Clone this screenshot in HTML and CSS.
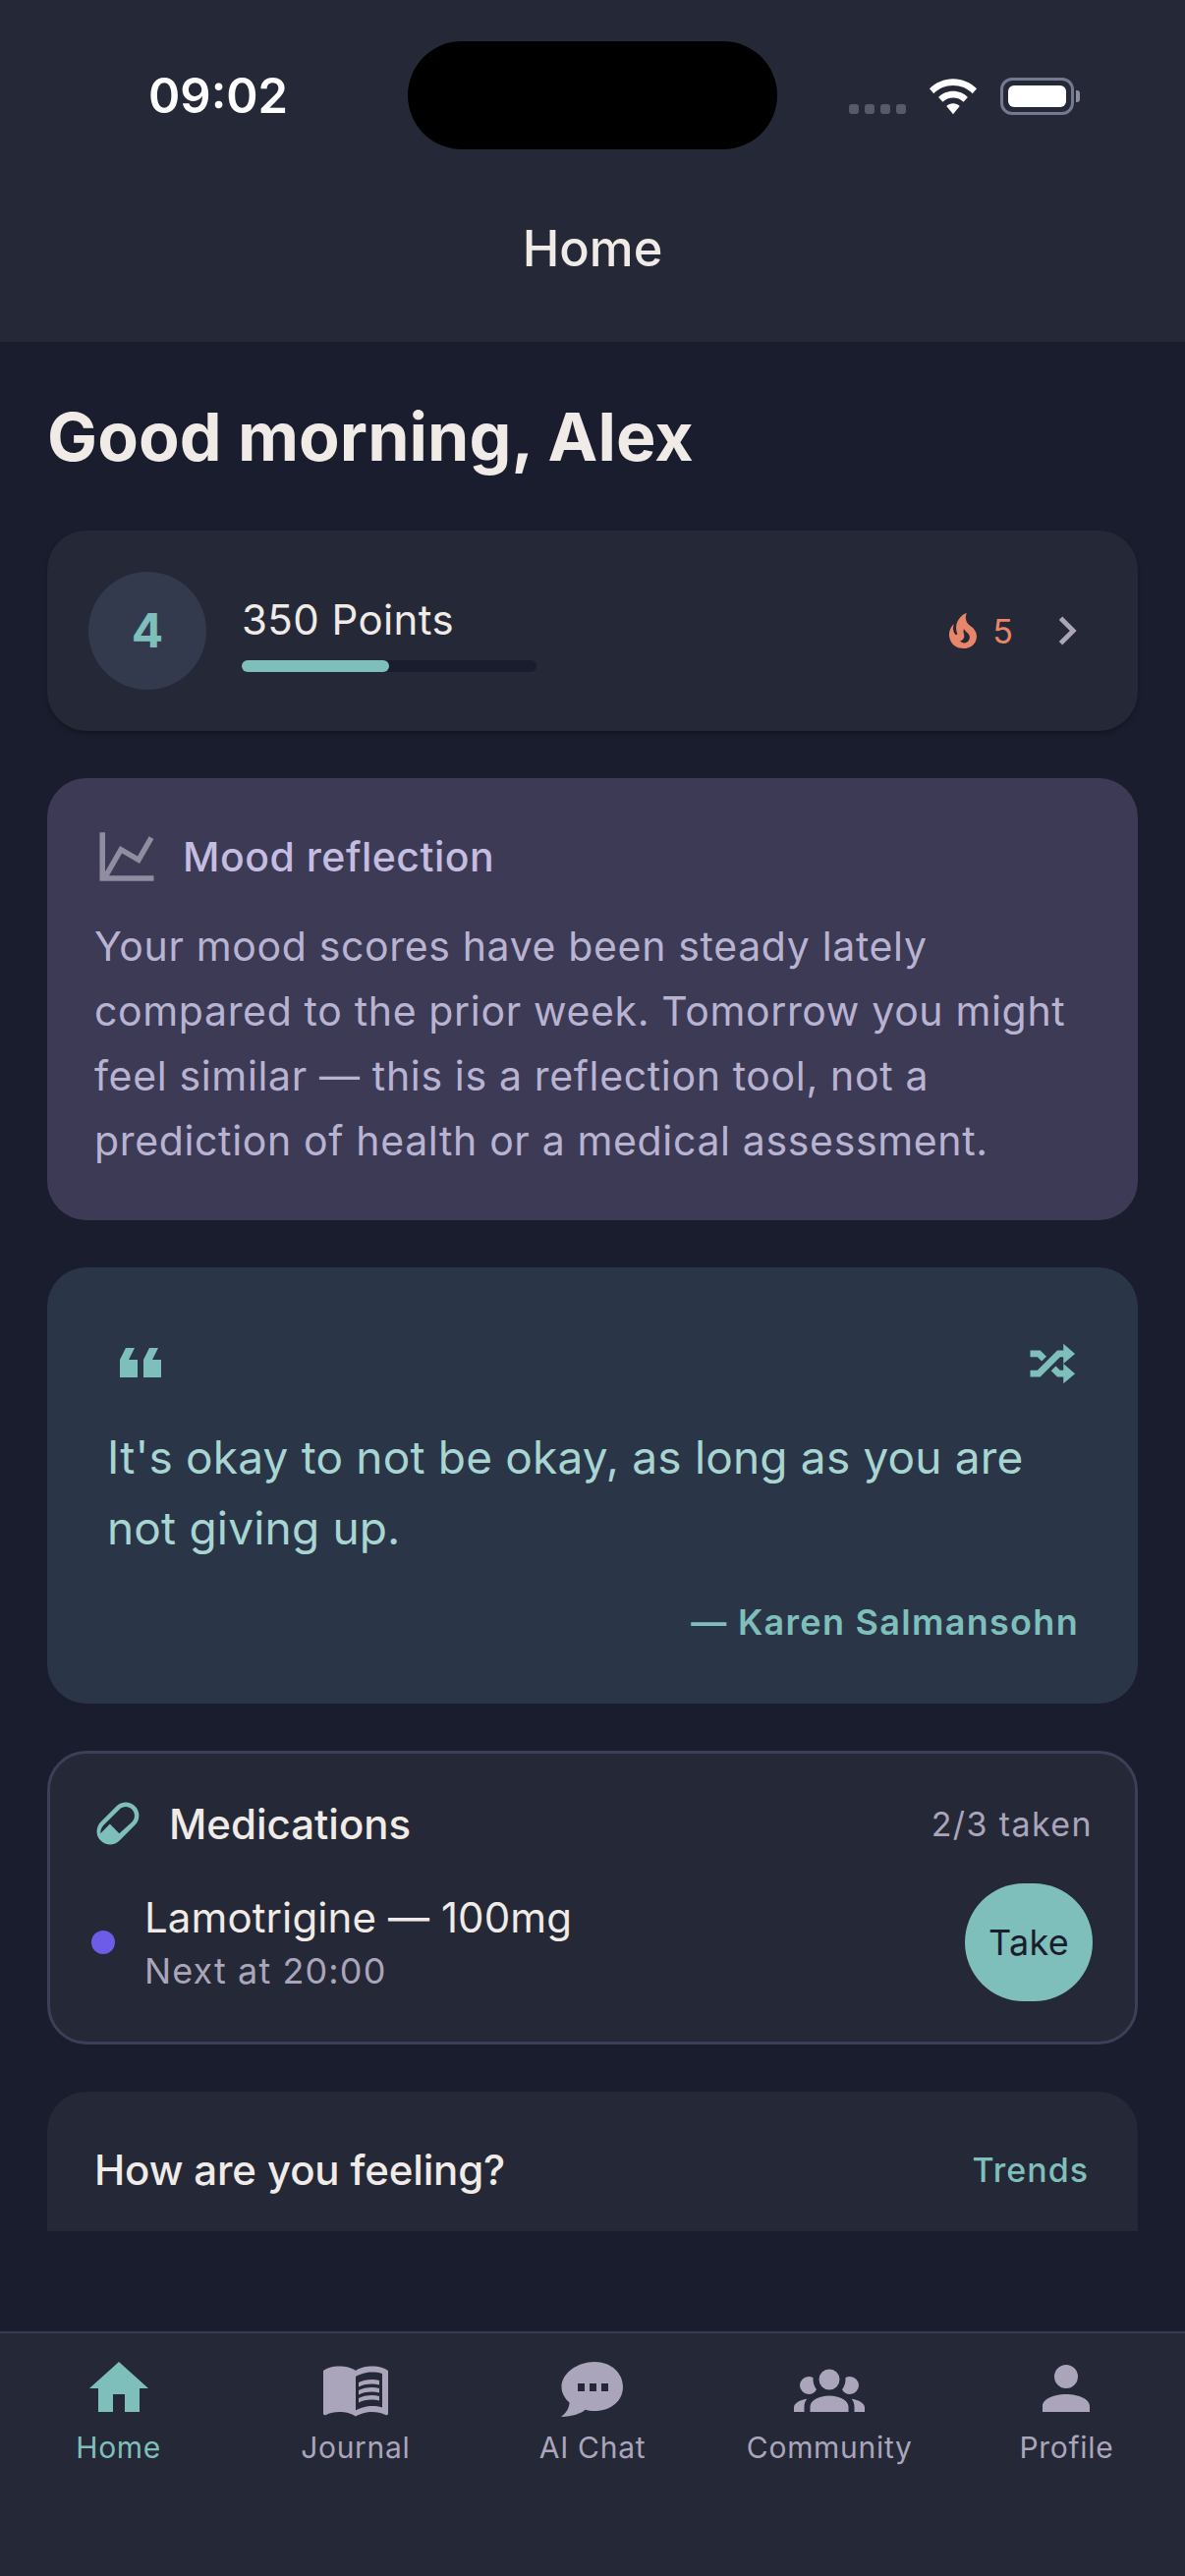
FILE: index.html
```html
<!DOCTYPE html>
<html lang="en">
<head>
    <meta charset="UTF-8">
    <meta name="viewport" content="width=device-width, initial-scale=1.0">
    <title>Home</title>
    <link rel="stylesheet" href="styles.css">
</head>
<body>
    <header class="top-bar">
        <div class="status-bar">
            <span class="clock">09:02</span>
            <div class="island"></div>
            <div class="status-icons">
                <div class="signal"><i></i><i></i><i></i><i></i></div>
                <svg class="wifi" viewBox="0 0 52 38"><path d="M26 0C35.500 0 44.500 3.800 51 10.500L46.500 15.500C41 10 34 7 26 7C18 7 11 10 5.500 15.500L1 10.500C7.500 3.800 16.500 0 26 0Z"/><path d="M26 13C32 13 37.500 15.300 41.500 19.500L37 24.500C34 21.500 30.200 20 26 20C21.800 20 18 21.500 15 24.500L10.500 19.500C14.500 15.300 20 13 26 13Z"/><path d="M26 26C28.700 26 31 27 33 29L26 37.500L19 29C21 27 23.300 26 26 26Z"/></svg>
                <div class="battery"><div class="battery-level"></div></div>
                <div class="battery-cap"></div>
            </div>
        </div>
        <div class="page-title">Home</div>
    </header>

    <main class="scroll">
        <h1 class="greeting">Good morning, Alex</h1>

        <section class="card level-card">
            <div class="level-badge">4</div>
            <div class="level-info">
                <div class="points">350 Points</div>
                <div class="progress"><div class="progress-fill"></div></div>
            </div>
            <div class="streak">
                <svg class="flame" viewBox="0 0 24 24"><path d="M17.66 11.2C17.43 10.9 17.15 10.64 16.89 10.38C16.22 9.78 15.46 9.35 14.82 8.72C13.33 7.26 13 4.85 13.95 3C13 3.23 12.17 3.75 11.46 4.32C8.87 6.4 7.85 10.07 9.07 13.22C9.11 13.32 9.15 13.42 9.15 13.55C9.15 13.77 9 13.97 8.8 14.05C8.57 14.15 8.33 14.09 8.14 13.93C8.08 13.88 8.04 13.83 8 13.76C6.87 12.33 6.69 10.28 7.45 8.64C5.78 10 4.87 12.3 5 14.47C5.06 14.97 5.12 15.47 5.29 15.97C5.43 16.57 5.7 17.17 6 17.7C7.08 19.43 8.95 20.67 10.96 20.92C13.1 21.19 15.39 20.8 17.03 19.32C18.86 17.66 19.5 15 18.56 12.72L18.43 12.46C18.22 12 17.66 11.2 17.66 11.2M14.5 17.5C14.22 17.74 13.76 18 13.4 18.1C12.28 18.5 11.16 17.94 10.5 17.28C11.69 17 12.4 16.12 12.61 15.23C12.78 14.43 12.46 13.77 12.33 13C12.21 12.26 12.23 11.63 12.5 10.94C12.69 11.32 12.89 11.7 13.13 12C13.9 13 15.11 13.44 15.37 14.8C15.41 14.94 15.43 15.08 15.43 15.23C15.46 16.05 15.1 16.95 14.5 17.5Z"/></svg>
                <span class="streak-count">5</span>
            </div>
            <svg class="chevron" viewBox="0 0 24 24"><path d="M8.59,16.58L13.17,12L8.59,7.41L10,6L16,12L10,18L8.59,16.58Z"/></svg>
        </section>

        <section class="card mood-card">
            <div class="mood-head">
                <svg class="chart" viewBox="0 0 24 24"><path d="M16,11.78L20.24,4.45L21.97,5.45L16.74,14.5L10.23,10.75L5.46,19H22V21H2V3H4V17.54L9.5,8L16,11.78Z"/></svg>
                <span class="mood-title">Mood reflection</span>
            </div>
            <p class="mood-text">Your mood scores have been steady lately compared to the prior week. Tomorrow you might feel similar — this is a reflection tool, not a prediction of health or a medical assessment.</p>
        </section>

        <section class="card quote-card">
            <div class="quote-icons">
                <svg class="quote-mark" viewBox="0 0 24 24"><path d="M10,7L8,11H11V17H5V11L7,7H10M18,7L16,11H19V17H13V11L15,7H18Z"/></svg>
                <svg class="shuffle" viewBox="0 0 24 24"><path d="M17,3L22.25,7.5L17,12L22.25,16.5L17,21V18H14.26L11.44,15.18L13.56,13.06L15.5,15H17V12L17,9H15.5L6.5,18H2V15H5.26L14.26,6H17V3M2,6H6.5L9.32,8.82L7.2,10.94L5.26,9H2V6Z"/></svg>
            </div>
            <p class="quote-text">It's okay to not be okay, as long as you are not giving up.</p>
            <div class="quote-author">— Karen Salmansohn</div>
        </section>

        <section class="card meds-card">
            <div class="meds-head">
                <svg class="pill" viewBox="0 0 24 24"><path fill-rule="evenodd" d="M4.22,11.29L11.29,4.22C13.64,1.88 17.43,1.88 19.78,4.22C22.12,6.57 22.12,10.36 19.78,12.71L12.71,19.78C10.36,22.12 6.57,22.12 4.22,19.78C1.88,17.43 1.88,13.64 4.22,11.29ZM5.64,12.71C4.59,13.75 4.1,15.12 4.14,16.5L8.37,12.27L12.61,16.5L18.36,11.29C19.92,9.73 19.92,7.2 18.36,5.64C16.8,4.08 14.27,4.08 12.71,5.64L5.64,12.71Z"/></svg>
                <span class="meds-title">Medications</span>
                <span class="meds-count">2/3 taken</span>
            </div>
            <div class="med-row">
                <div class="med-dot"></div>
                <div class="med-info">
                    <div class="med-name">Lamotrigine — 100mg</div>
                    <div class="med-next">Next at 20:00</div>
                </div>
                <button class="take-button">Take</button>
            </div>
        </section>

        <section class="card feeling-card">
            <span class="feeling-title">How are you feeling?</span>
            <span class="trends">Trends</span>
        </section>
    </main>

    <div class="scroll-gap"></div>

    <nav class="tab-bar">
        <div class="tab tab-active">
            <svg class="tab-icon" viewBox="0 0 24 24"><path d="M10,20V14H14V20H19V12H22L12,3L2,12H5V20H10Z"/></svg>
            <span>Home</span>
        </div>
        <div class="tab">
            <svg class="tab-icon" viewBox="0 0 24 24"><path fill-rule="evenodd" d="M12,21.500C10.650,20.450 8.200,20 6.500,20C4.850,20 3.150,20.300 1.750,21.050C1.650,21.100 1.600,21.100 1.500,21.100C1.250,21.100 1,20.850 1,20.600V6C1.600,5.550 2.250,5.250 3,5C4.110,4.650 5.330,4.500 6.500,4.500C8.450,4.500 10.550,4.900 12,6C13.450,4.900 15.550,4.500 17.500,4.500C18.670,4.500 19.890,4.650 21,5C21.750,5.250 22.400,5.550 23,6V20.600C23,20.850 22.750,21.100 22.500,21.100C22.400,21.100 22.350,21.100 22.250,21.050C20.850,20.300 19.150,20 17.500,20C15.800,20 13.350,20.650 12,21.500ZM12,8V19.500C13.350,18.650 15.800,18 17.500,18C18.700,18 19.900,18.150 21,18.500V7C19.900,6.650 18.700,6.500 17.500,6.500C15.800,6.500 13.350,7.150 12,8Z"/><path d="M13,11.500C14.110,10.820 15.600,10.500 17.500,10.500C18.410,10.500 19.260,10.590 20,10.820V9.300C19.260,9.100 18.410,9 17.500,9C15.800,9 14.270,9.390 13,9.970ZM13,14.160C14.110,13.500 15.600,13.160 17.500,13.160C18.410,13.160 19.260,13.250 20,13.480V11.960C19.260,11.760 18.410,11.660 17.500,11.660C15.800,11.660 14.270,12.050 13,12.630ZM13,16.830C14.110,16.160 15.600,15.830 17.500,15.830C18.410,15.830 19.260,15.920 20,16.150V14.630C19.260,14.430 18.410,14.330 17.500,14.330C15.800,14.330 14.270,14.720 13,15.300Z"/></svg>
            <span>Journal</span>
        </div>
        <div class="tab">
            <svg class="tab-icon" viewBox="0 0 72 72"><path fill-rule="evenodd" d="M38 9C55 9 67 20.500 67 34.500C67 48.500 55 59 38 59C34 59 31.500 58.600 28.500 57.700C24.500 61.500 16 64.500 4 65C9 61.500 12.500 56 12.500 50.500C7.500 46 4.500 40.500 4.500 34.500C4.500 20.500 21 9 38 9ZM21 31V39H28V31ZM33 31V39H40V31ZM45 31V39H52V31Z"/></svg>
            <span>AI Chat</span>
        </div>
        <div class="tab">
            <svg class="tab-icon" viewBox="0 0 24 24"><path d="M12,5.5A3.5,3.5 0 0,1 15.5,9A3.5,3.5 0 0,1 12,12.5A3.5,3.5 0 0,1 8.5,9A3.5,3.5 0 0,1 12,5.5M5,8C5.56,8 6.08,8.15 6.53,8.42C6.38,9.85 6.8,11.27 7.66,12.38C7.16,13.34 6.16,14 5,14A3,3 0 0,1 2,11A3,3 0 0,1 5,8M19,8A3,3 0 0,1 22,11A3,3 0 0,1 19,14C17.84,14 16.84,13.34 16.34,12.38C17.2,11.27 17.62,9.85 17.47,8.42C17.92,8.15 18.44,8 19,8M5.5,18.25C5.5,16.18 8.41,14.5 12,14.5C15.59,14.5 18.5,16.18 18.5,18.25V20H5.5V18.25M0,20V18.5C0,17.11 1.89,15.94 4.45,15.6C3.86,16.28 3.5,17.22 3.5,18.25V20H0M24,20H20.5V18.25C20.5,17.22 20.14,16.28 19.55,15.6C22.11,15.94 24,17.11 24,18.5V20Z"/></svg>
            <span>Community</span>
        </div>
        <div class="tab">
            <svg class="tab-icon" viewBox="0 0 24 24"><path d="M12,4A4,4 0 0,1 16,8A4,4 0 0,1 12,12A4,4 0 0,1 8,8A4,4 0 0,1 12,4M12,14C16.42,14 20,15.79 20,18V20H4V18C4,15.79 7.58,14 12,14Z"/></svg>
            <span>Profile</span>
        </div>
    </nav>
</body>
</html>
```

FILE: styles.css
```css
* {
    box-sizing: border-box;
}
html, body {
    margin: 0;
    height: 2622px;
    overflow: hidden;
}
body {
    display: flex;
    flex-direction: column;
    background-color: #1a1d2e;
    font-family: Inter, "Liberation Sans", sans-serif;
    color: #f0ebe6;
}

/* top of the screen */
.top-bar {
    height: 348px;
    background-color: #252836;
}
.status-bar {
    display: flex;
    align-items: flex-start;
    height: 152px;
    padding-top: 42px;
}
.clock {
    width: 415px;
    padding-left: 151px;
    padding-top: 29px;
    font-size: 49px;
    line-height: 54px;
    font-weight: 600;
    color: #ffffff;
}
.island {
    width: 376px;
    height: 110px;
    border-radius: 55px;
    background-color: #000000;
}
.status-icons {
    display: flex;
    align-items: center;
    height: 40px;
    margin-top: 36px;
    margin-left: 73px;
}
.signal {
    display: flex;
    gap: 6px;
    align-self: flex-end;
    margin-bottom: 2px;
}
.signal i {
    width: 10px;
    height: 10px;
    border-radius: 3px;
    background-color: #575a6b;
}
.wifi {
    width: 50px;
    height: 37px;
    margin-left: 23px;
    fill: #ffffff;
}
.battery {
    width: 75px;
    height: 38px;
    margin-left: 23px;
    padding: 5px;
    border: 3px solid #737a8d;
    border-radius: 12px;
}
.battery-level {
    width: 100%;
    height: 100%;
    border-radius: 6px;
    background-color: #ffffff;
}
.battery-cap {
    width: 4px;
    height: 12px;
    margin-left: 2px;
    border-radius: 0 3px 3px 0;
    background-color: #8f8ba2;
}
.page-title {
    padding-top: 72px;
    text-align: center;
    font-size: 50.5px;
    line-height: 58px;
    font-weight: 500;
    color: #f0ebe6;
}

/* scrolling area */
.scroll {
    height: 1923px;
    padding: 0 48px;
    overflow: hidden;
}
.greeting {
    margin: 0;
    padding-top: 53px;
    height: 192px;
    font-size: 68px;
    line-height: 86px;
    font-weight: 700;
    letter-spacing: 0.1px;
}
.card {
    margin-bottom: 48px;
    border-radius: 40px;
    background-color: #252836;
}
.level-card {
    display: flex;
    align-items: center;
    height: 204px;
    padding: 0 43px 0 42px;
    box-shadow: 0 3px 4px rgba(0, 0, 0, 0.25);
}
.level-badge {
    width: 120px;
    height: 120px;
    border-radius: 50%;
    background-color: #343a4e;
    color: #7fbfbb;
    font-size: 48px;
    font-weight: 700;
    line-height: 120px;
    text-align: center;
}
.level-info {
    flex: 1;
    margin-left: 36px;
    padding-top: 5px;
}
.points {
    font-size: 42px;
    line-height: 50px;
    letter-spacing: 0.4px;
}
.progress {
    width: 300px;
    height: 12px;
    margin-top: 16px;
    border-radius: 6px;
    background-color: #1a1d2e;
}
.progress-fill {
    width: 150px;
    height: 100%;
    border-radius: 6px;
    background-color: #7fbfbb;
}
.streak {
    display: flex;
    align-items: center;
    margin-right: 26px;
    color: #e8866a;
}
.flame {
    width: 48px;
    height: 48px;
    fill: #e8866a;
}
.streak-count {
    margin-left: 6px;
    font-size: 34px;
}
.chevron {
    width: 58px;
    height: 58px;
    fill: #aaa5bb;
}

.mood-card {
    height: 450px;
    padding: 47px 48px 0;
    background-color: #3d3a56;
}
.mood-head {
    display: flex;
    align-items: center;
}
.chart {
    width: 66px;
    height: 66px;
    fill: #8f8d9f;
}
.mood-title {
    margin-left: 24px;
    font-size: 41px;
    font-weight: 500;
    color: #c5bde0;
    letter-spacing: 0.5px;
}
.mood-text {
    margin: 25px 0 0;
    font-size: 41px;
    line-height: 66px;
    letter-spacing: 0.65px;
    color: #b9b3d2;
}

.quote-card {
    height: 444px;
    padding: 61px 60px 0 61px;
    background-color: #2a3648;
}
.quote-icons {
    display: flex;
    justify-content: space-between;
    height: 66px;
}
.quote-mark {
    width: 72px;
    height: 72px;
    margin-left: -2px;
    fill: #7fbfbb;
}
.shuffle {
    width: 54px;
    height: 54px;
    margin-top: 10px;
    fill: #7fbfbb;
}
.quote-text {
    margin: 30px 0 0;
    font-size: 46px;
    line-height: 72px;
    letter-spacing: 0.18px;
    color: #a8d5d2;
}
.quote-author {
    margin-top: 38px;
    text-align: right;
    font-size: 36px;
    font-weight: 600;
    letter-spacing: 1.3px;
    color: #7fbfbb;
}

.meds-card {
    height: 299px;
    padding: 44px 43px 0 42px;
    border: 3px solid #3f3e58;
}
.meds-head {
    display: flex;
    align-items: center;
}
.pill {
    width: 54px;
    height: 54px;
    fill: #7fbfbb;
}
.meds-title {
    flex: 1;
    margin-left: 25px;
    font-size: 42px;
    font-weight: 500;
}
.meds-count {
    font-size: 34px;
    letter-spacing: 1.4px;
    color: #aaa5bb;
}
.med-row {
    display: flex;
    align-items: center;
    margin-top: 34px;
}
.med-dot {
    width: 24px;
    height: 24px;
    border-radius: 50%;
    background-color: #6c5ce7;
}
.med-info {
    flex: 1;
    margin-left: 30px;
}
.med-name {
    font-size: 42px;
    line-height: 52px;
    letter-spacing: 0.1px;
}
.med-next {
    margin-top: 5px;
    font-size: 36px;
    line-height: 46px;
    letter-spacing: 1.1px;
    color: #aaa5bb;
}
.take-button {
    width: 130px;
    height: 120px;
    padding: 0;
    border: none;
    border-radius: 60px;
    background-color: #7fbfbb;
    color: #1a1d2e;
    font-family: inherit;
    font-size: 36px;
    font-weight: 400;
    letter-spacing: 0.3px;
}

.feeling-card {
    display: flex;
    justify-content: space-between;
    height: 220px;
    padding: 55px 50px 0 48px;
    margin-bottom: 0;
}
.feeling-title {
    font-size: 42px;
    font-weight: 500;
    line-height: 50px;
    letter-spacing: -0.15px;
}
.trends {
    font-size: 34px;
    font-weight: 500;
    line-height: 50px;
    letter-spacing: 1px;
    color: #7fbfbb;
}

.scroll-gap {
    height: 102px;
}

/* bottom tabs */
.tab-bar {
    flex: 1;
    display: flex;
    padding-top: 20px;
    border-top: 2px solid #3a3a50;
    background-color: #252836;
}
.tab {
    flex: 1;
    display: flex;
    flex-direction: column;
    align-items: center;
    font-size: 30px;
    line-height: 36px;
    letter-spacing: 0.7px;
    color: #aaa5bb;
}
.tab-icon {
    width: 72px;
    height: 72px;
    margin-bottom: 6px;
    fill: #aaa5bb;
}
.tab-active {
    color: #7fbfbb;
}
.tab-active .tab-icon {
    fill: #7fbfbb;
}
```
